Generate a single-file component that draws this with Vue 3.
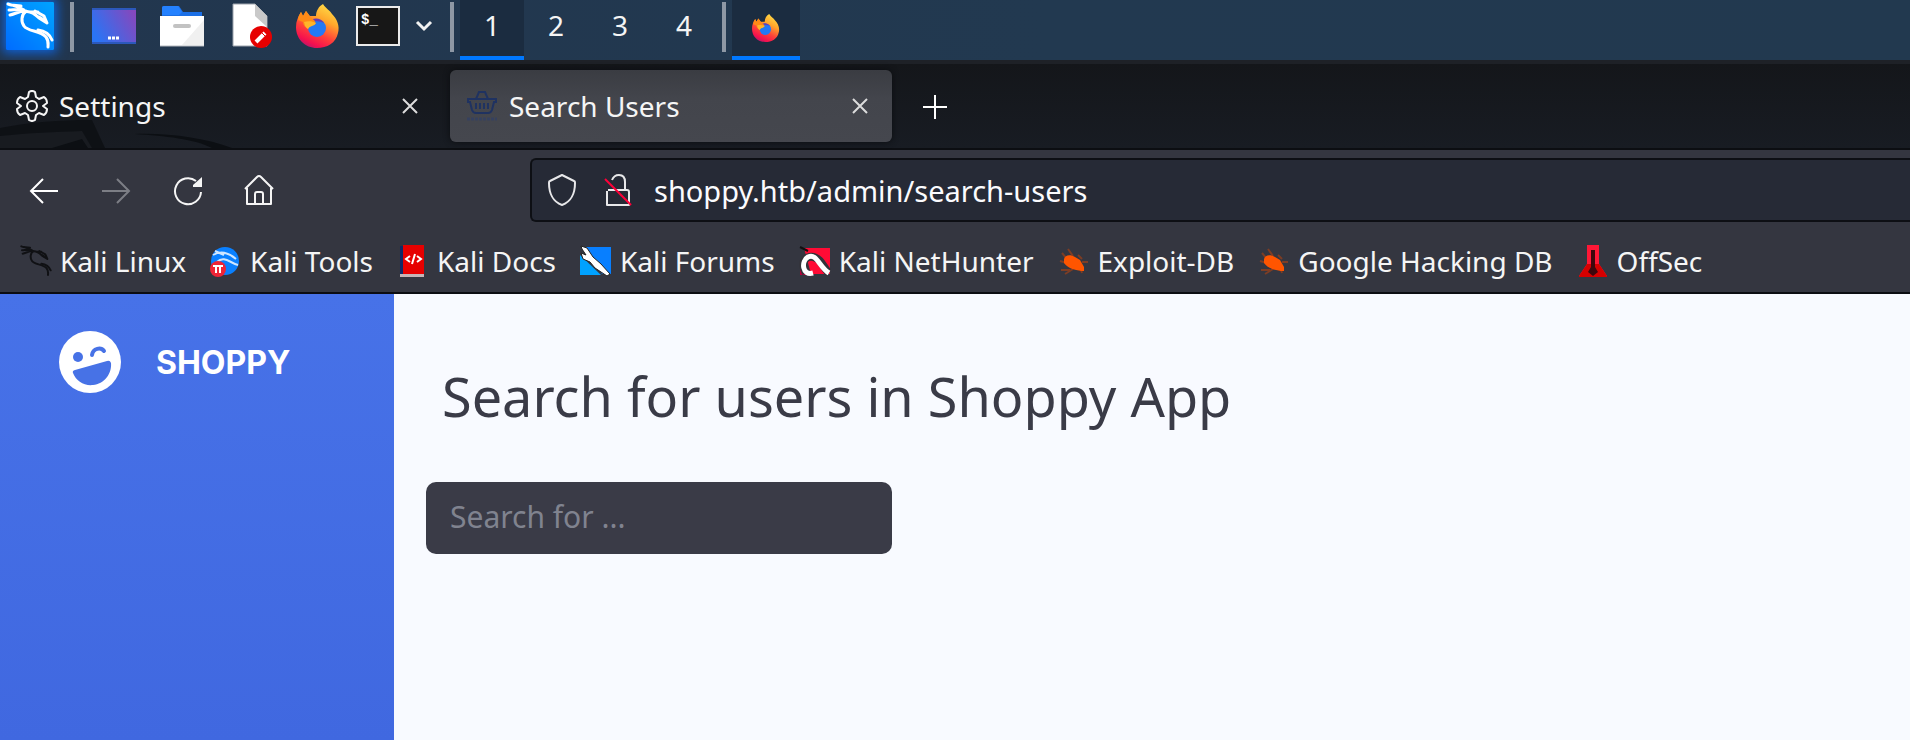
<script setup>
import { ref } from 'vue'

const workspaces = ['1', '2', '3', '4']
const activeWorkspace = ref('1')
const address = ref('shoppy.htb/admin/search-users')
const query = ref('')

const bookmarks = [
  { label: 'Kali Linux', icon: 'dragon' },
  { label: 'Kali Tools', icon: 'tools' },
  { label: 'Kali Docs', icon: 'docs' },
  { label: 'Kali Forums', icon: 'forums' },
  { label: 'Kali NetHunter', icon: 'nethunter' },
  { label: 'Exploit-DB', icon: 'bug' },
  { label: 'Google Hacking DB', icon: 'bug' },
  { label: 'OffSec', icon: 'offsec' },
]
</script>

<template>
  <div class="desktop">
    <svg class="defs" width="0" height="0" aria-hidden="true">
      <defs>
        <linearGradient id="fox-body" x1="0.8" y1="0" x2="0.3" y2="1">
          <stop offset="0" stop-color="#ffe24a" />
          <stop offset="0.35" stop-color="#ffa62b" />
          <stop offset="0.65" stop-color="#ff4139" />
          <stop offset="0.88" stop-color="#f5104f" />
          <stop offset="1" stop-color="#b8186b" />
        </linearGradient>
        <linearGradient id="kali-tile" x1="1" y1="0" x2="0" y2="1">
          <stop offset="0" stop-color="#00a4ff" />
          <stop offset="1" stop-color="#006cff" />
        </linearGradient>
        <linearGradient id="screen" x1="0" y1="0.6" x2="1" y2="0.2">
          <stop offset="0" stop-color="#2a74f5" />
          <stop offset="1" stop-color="#8548bd" />
        </linearGradient>
      </defs>
      <symbol id="firefox" viewBox="0 0 44 44">
        <path fill="url(#fox-body)" d="M27 0C30 5 34 6 36 10C41 15 44 22 42 29C40 39 31 44 21 44C9 44 0 35 0 23C0 17 2 13 5 8L7 12L10 7L14 12L20 12C20 7 23 2 27 0Z" />
        <circle cx="21" cy="24" r="9" fill="#2379f5" />
        <path fill="#6a3bb0" d="M14 17C18 13 25 14 28 19C24 17 19 17 14 17Z" />
        <path fill="#ff8a16" d="M2 16C2 12 4 10 5 8L7 12L10 7L14 13L18 16C20 18 20 20 18 21C15 21 13 23 12 25C9 23 7 21 7 18Z" />
        <path fill="#ffb52a" d="M8 18C12 17 16 17 20 19C18 23 14 21 12 25C9 23 9 21 8 18Z" />
      </symbol>
      <symbol id="dragon" viewBox="0 0 48 48">
        <g fill="none" stroke="currentColor" stroke-linecap="round" stroke-linejoin="round">
          <path stroke-width="3" d="M2 2C8 4 12 4 18 8M5 3L15 4M3 8C8 8 12 6 18 9M4 13C9 12 13 9 19 9M20 9C15 13 15 20 18 24C22 30 34 28 40 35C43 39 42 42 42 45" />
          <path stroke-width="3" d="M32 28C40 29 44 33 46 38M18 10C24 8 29 12 33 16L41 21L38 14L29 9M24 10L32 10" />
          <path stroke-width="3" d="M33 15L38 18" />
        </g>
      </symbol>
    </svg>

    <header class="panel">
      <button class="kali-menu" aria-label="Applications">
        <svg width="48" height="48" viewBox="0 0 48 48">
          <rect width="48" height="48" rx="1" fill="url(#kali-tile)" />
          <use href="#dragon" width="48" height="48" />
        </svg>
      </button>
      <span class="divider"></span>
      <div class="launchers">
        <button aria-label="Show desktop">
          <svg width="44" height="44" viewBox="0 0 44 44">
            <rect y="4" width="44" height="36" fill="#2c58bb" />
            <rect y="6" width="44" height="32" fill="url(#screen)" />
            <path stroke="#fff" stroke-width="3" stroke-dasharray="3 1" d="M16 34H28" />
          </svg>
        </button>
        <button aria-label="File manager">
          <svg width="44" height="44" viewBox="0 0 44 44">
            <path fill="#1b6fe6" d="M2 4Q2 2 4 2H19L23 8H42V14H2Z" />
            <path fill="#2481ff" d="M2 4Q2 2 4 2H18L22 8L19 11H2Z" />
            <path fill="#fff" d="M0 12H44V42H0Z" />
            <path fill="#f0f0f0" d="M44 16V41H22Z" />
            <path stroke="#c2c2c2" stroke-width="4" stroke-linecap="round" d="M15 22H29" />
            <path stroke="#b4b8be" stroke-width="1" d="M0 42H44" />
          </svg>
        </button>
        <button aria-label="Text editor">
          <svg width="44" height="46" viewBox="-3 0 44 46">
            <path fill="#fff" stroke="#9da4ad" d="M2 1H24L36 13V43H2Z" />
            <path fill="#c9c9c9" d="M24 1L36 13V24L24 13Z" />
            <circle cx="30" cy="34" r="11" fill="#e60000" />
            <path stroke="#fff" stroke-width="4" d="M25 39L34 30" />
            <path stroke="#e60000" stroke-width="1" d="M31 30L34 33" />
          </svg>
        </button>
        <button aria-label="Firefox">
          <svg width="44" height="44"><use href="#firefox" width="44" height="44" /></svg>
        </button>
      </div>
      <button class="terminal" aria-label="Terminal">
        <svg width="44" height="40" viewBox="0 0 44 40">
          <rect x="1" y="1" width="42" height="38" fill="#171717" stroke="#ebebeb" stroke-width="2" />
          <text x="5" y="18" class="prompt">$_</text>
        </svg>
      </button>
      <button class="more" aria-label="More launchers">
        <svg width="20" height="16" viewBox="0 0 20 16" fill="none" stroke="#f2f2f2" stroke-width="3">
          <path d="M3 4L10 11L17 4" />
        </svg>
      </button>
      <span class="divider"></span>
      <nav class="workspaces" aria-label="Workspaces">
        <button
          v-for="name in workspaces"
          :key="name"
          :class="{ active: name === activeWorkspace }"
          @click="activeWorkspace = name"
        >{{ name }}</button>
      </nav>
      <span class="divider"></span>
      <button class="task" aria-label="Search Users — Firefox">
        <svg width="28" height="28"><use href="#firefox" width="28" height="28" /></svg>
      </button>
    </header>

    <section class="tabs">
      <svg class="wallpaper" width="240" height="30" viewBox="0 0 240 30" aria-hidden="true">
        <path fill="#0e1115" d="M0 10C30 4 60 2 92 2L105 30H0Z" />
        <path fill="#181b20" d="M0 18C30 15 55 14 82 13L92 30H0Z" />
        <path fill="#0c0f13" d="M52 30L82 21L88 30Z" />
        <path fill="#0c0f13" d="M135 16C170 15 205 20 232 30H212C195 21 165 18 135 16Z" />
      </svg>
      <div class="tab">
        <svg width="32" height="32" viewBox="0 0 32 32" fill="none" stroke="#f5f5f5" stroke-width="2">
          <path stroke-linejoin="round" d="M13 2Q16 0 19 2L20 7L23 9L28 7Q31 9 31 13L27 16L31 19Q31 23 28 25L23 23L20 25L19 30Q16 32 13 30L12 25L9 23L4 25Q1 23 1 19L5 16L1 13Q1 9 4 7L9 9L12 7Z" />
          <circle cx="16" cy="16" r="5" />
        </svg>
        <span class="title">Settings</span>
        <button class="close" aria-label="Close Settings">
          <svg width="18" height="18" viewBox="0 0 18 18" stroke="#dcdcdc" stroke-width="2"><path d="M2 2L16 16M16 2L2 16" /></svg>
        </button>
      </div>
      <div class="tab current">
        <svg width="32" height="32" viewBox="0 0 32 32" fill="none" stroke="#1f3261" stroke-width="2">
          <path d="M2 9H30V12H28L26 20Q25 23 22 23H10Q7 23 6 20L4 12H2ZM10 9L13 2H19L22 9" />
          <path stroke-width="2" d="M10 13V19M14 13V19M18 13V19M22 13V19" />
          <path stroke="#36415e" stroke-width="3" stroke-dasharray="3 1" d="M1 29H31" />
        </svg>
        <span class="title">Search Users</span>
        <button class="close" aria-label="Close Search Users">
          <svg width="18" height="18" viewBox="0 0 18 18" stroke="#dcdcdc" stroke-width="2"><path d="M2 2L16 16M16 2L2 16" /></svg>
        </button>
      </div>
      <button class="new-tab" aria-label="New tab">
        <svg width="26" height="26" viewBox="0 0 26 26" stroke="#fff" stroke-width="2"><path d="M1 14H25M13 2V26" /></svg>
      </button>
    </section>

    <section class="toolbar">
      <div class="history">
        <button aria-label="Back">
          <svg width="32" height="32" viewBox="0 0 32 32" fill="none" stroke="#fff" stroke-width="2"><path d="M30 17H3M15 5L3 17L15 29" /></svg>
        </button>
        <button aria-label="Forward" disabled>
          <svg width="32" height="32" viewBox="0 0 32 32" fill="none" stroke="#7c7e85" stroke-width="2"><path d="M2 17H29M17 5L29 17L17 29" /></svg>
        </button>
        <button aria-label="Reload">
          <svg width="32" height="32" viewBox="0 0 32 32" fill="none" stroke="#f5f5f5" stroke-width="2">
            <path d="M29 18A13 13 0 1 1 24 7" />
            <path fill="#f5f5f5" stroke="none" d="M30 3V13H21V11Z" />
          </svg>
        </button>
        <button aria-label="Home">
          <svg width="32" height="32" viewBox="1 0 32 32" fill="none" stroke="#f5f5f5" stroke-width="2">
            <path stroke-linejoin="round" d="M2 15L14 3Q16 1 18 3L30 15M4 14V30H28V14M12 30V20Q12 18 14 18H18Q20 18 20 20V30" />
          </svg>
        </button>
      </div>
      <label class="address">
        <svg width="32" height="32" viewBox="0 0 32 32" fill="none" stroke="#e8e8ea" stroke-width="2" stroke-linejoin="round">
          <path d="M16 1L28 7Q29 7 29 9C29 19 25 28 16 31C7 28 3 19 3 9Q3 7 4 7Z" />
        </svg>
        <svg width="32" height="32" viewBox="0 0 32 32" fill="none" stroke="#e8e8ea" stroke-width="2" stroke-linejoin="round">
          <path d="M10 6Q12 1 17 1Q23 1 23 8V15M6 16H25Q27 16 27 18V31H5V17" />
          <path stroke="#ff0039" stroke-width="2" d="M3 5L29 31" />
        </svg>
        <input v-model="address" type="text" aria-label="Address" spellcheck="false" />
      </label>
    </section>

    <nav class="bookmarks" aria-label="Bookmarks">
      <a v-for="mark in bookmarks" :key="mark.label" href="#">
        <svg v-if="mark.icon === 'dragon'" class="dark" width="32" height="32"><use href="#dragon" width="32" height="32" /></svg>
        <svg v-else-if="mark.icon === 'tools'" width="32" height="32" viewBox="2 0 32 32">
          <circle cx="17" cy="16" r="14" fill="#0a80ff" />
          <path fill="none" stroke="#cfe6ff" stroke-width="2" d="M5 10C13 5 21 8 28 14M9 17C16 10 22 18 30 20M7 6L16 10" />
          <circle cx="10" cy="24" r="8" fill="#ee2436" />
          <path fill="none" stroke="#fff" stroke-width="2" d="M5 21H15M8 21V28M12 21V28" />
        </svg>
        <svg v-else-if="mark.icon === 'docs'" width="32" height="32" viewBox="0 0 32 32">
          <path fill="#102a66" d="M3 1H7V29H3Z" />
          <path fill="#e60000" d="M6 0H27V29H6Z" />
          <path fill="#c5b5b7" d="M3 29H27V32H3Z" />
          <path fill="none" stroke="#fff" stroke-width="2" d="M13 11L9 14L13 17M20 11L24 14L20 17M18 9L15 19" />
        </svg>
        <svg v-else-if="mark.icon === 'forums'" width="32" height="32" viewBox="0 0 32 32">
          <path fill="#087fff" d="M3 2H31V29H22Z" />
          <path fill="#00a2ff" d="M0 10L21 30H0Z" />
          <path fill="#fff" stroke="#222" d="M1 1L7 3L13 12L21 19L30 29L27 31L15 23L10 17L3 14L1 8L6 10L2 4Z" />
        </svg>
        <svg v-else-if="mark.icon === 'nethunter'" width="32" height="32" viewBox="0 0 32 32">
          <path fill="#ff0b35" d="M5 3H31V29H12Z" />
          <path fill="#b30038" d="M1 22L10 30H1Z" />
          <path fill="none" stroke="#33333a" stroke-width="8" d="M7 28C0 16 8 9 17 13C23 15 25 24 30 28" />
          <path fill="none" stroke="#fff" stroke-width="5" d="M14 28C3 31 2 16 9 12C18 8 20 22 30 28" />
          <path fill="none" stroke="#111" stroke-width="2" d="M1 2L9 6" />
        </svg>
        <svg v-else-if="mark.icon === 'bug'" width="32" height="32" viewBox="0 0 32 32">
          <path fill="none" stroke="#7d3d24" stroke-width="2" d="M10 4L15 11M4 8L9 14M2 16L9 18M3 25H12M7 29L15 24M20 10L24 14M24 17H30M24 28L22 22" />
          <path fill="#ff5500" d="M6 14C7 10 12 9 17 12L22 15L26 22V26C20 26 10 24 6 18Z" />
        </svg>
        <svg v-else width="32" height="32" viewBox="0 0 32 32">
          <path fill="#ff1736" d="M10 0H22V19L30 31H2L10 19Z" />
          <path fill="#d50000" d="M10 19H22L30 31V32H2V31Z" />
          <path fill="#3c070c" d="M14 5H18V22L21 27L16 31L11 27L14 22Z" />
        </svg>
        <span>{{ mark.label }}</span>
      </a>
    </nav>

    <div class="page">
      <aside class="sidebar">
        <a class="brand" href="#">
          <svg width="64" height="64" viewBox="0 0 64 64">
            <circle cx="32" cy="32" r="31" fill="#fff" />
            <circle cx="20" cy="27" r="5" fill="#4772e6" />
            <path fill="none" stroke="#4772e6" stroke-width="4" stroke-linecap="round" d="M34 25C35 18 43 17 46 21" />
            <path fill="#4772e6" d="M17 40L49 31Q52 30 53 33C54 44 46 54 35 55C26 56 18 51 15 43Q14 41 17 40Z" />
          </svg>
          <span>SHOPPY</span>
        </a>
      </aside>
      <main class="content">
        <h1>Search for users in Shoppy App</h1>
        <form role="search" @submit.prevent>
          <input v-model="query" type="text" placeholder="Search for ..." aria-label="Search for users" />
        </form>
      </main>
    </div>
  </div>
</template>

<style>
body {
  margin: 0;
  background: #f8faff;
}
</style>

<style scoped>
.desktop {
  display: flex;
  flex-direction: column;
  min-height: 100vh;
  overflow: hidden;
  font-family: "Noto Sans", sans-serif;
  font-size: 28px;
  color: #f5f5f5;
}
.defs {
  position: absolute;
}
svg {
  display: block;
  flex: none;
}
button {
  display: flex;
  align-items: center;
  justify-content: center;
  padding: 0;
  border: 0;
  background: none;
  color: inherit;
  font: inherit;
}
a {
  color: inherit;
  text-decoration: none;
}

.panel {
  display: flex;
  align-items: center;
  height: 60px;
  background: linear-gradient(90deg, #22364e, #223950 55%, #22394f);
}
.kali-menu {
  align-self: flex-start;
  margin: 2px 16px 0 6px;
  color: #fff;
  box-shadow: 0 0 10px 3px #0f62d8;
}
.divider {
  flex: none;
  align-self: flex-start;
  width: 4px;
  height: 50px;
  margin-top: 2px;
  background: #8e98a5;
}
.launchers {
  display: flex;
  align-items: center;
  gap: 24px;
  height: 52px;
  margin: 0 16px 8px 18px;
}
.terminal {
  height: 52px;
  margin: 0 14px 8px 0;
}
.prompt {
  font: bold 14px "Liberation Mono", monospace;
  fill: #fff;
}
.more {
  width: 20px;
  height: 52px;
  margin: 0 16px 8px 0;
}
.workspaces {
  display: flex;
  height: 100%;
  margin: 0 6px;
}
.workspaces button {
  width: 64px;
  padding-bottom: 6px;
  border-bottom: 4px solid transparent;
}
.workspaces .active,
.task {
  border-bottom: 4px solid #0078ff;
  background: #1b2c40;
}
.task {
  width: 68px;
  height: 100%;
  margin-left: 6px;
}

.tabs {
  position: relative;
  display: flex;
  align-items: center;
  height: 80px;
  padding: 2px 0;
  border-top: 4px solid #1e2127;
  border-bottom: 2px solid #0c0e12;
  background: linear-gradient(#14161a, #181c23);
}
.wallpaper {
  position: absolute;
  left: 0;
  bottom: 0;
}
.tab {
  position: relative;
  display: flex;
  align-items: center;
  box-sizing: border-box;
  width: 442px;
  height: 72px;
  margin-right: 8px;
  padding: 0 23px 0 16px;
  border-radius: 6px;
}
.tab.current {
  background: linear-gradient(#3a3c42, #43454c 40%, #45474e);
  box-shadow: 0 0 6px #0b0d10;
}
.title {
  flex: 1;
  margin-left: 11px;
}
.new-tab {
  margin-left: 22px;
}

.toolbar {
  display: flex;
  align-items: center;
  padding-top: 8px;
  background: #343640;
}
.history {
  display: flex;
  gap: 40px;
  width: 502px;
  padding-left: 28px;
}
.address {
  display: flex;
  flex: 1;
  align-items: center;
  gap: 24px;
  box-sizing: border-box;
  height: 64px;
  padding-left: 14px;
  border: 2px solid #0d0f14;
  border-right: 0;
  border-radius: 6px 0 0 6px;
  background: #262a36;
}
.address input {
  flex: 1;
  min-width: 0;
  margin-left: -4px;
  padding: 0;
  border: 0;
  outline: 0;
  background: none;
  color: #fbfbfe;
  font: 29px "Noto Sans", sans-serif;
}

.bookmarks {
  display: flex;
  align-items: center;
  gap: 24px;
  height: 62px;
  padding: 8px 0 0 20px;
  border-bottom: 2px solid #0c0d12;
  background: #343640;
  white-space: nowrap;
}
.bookmarks a {
  display: flex;
  align-items: center;
  gap: 8px;
}
.dark {
  color: #101114;
}

.page {
  display: flex;
  flex: 1;
  background: #f8faff;
}
.sidebar {
  flex: none;
  width: 394px;
  background: linear-gradient(#4772e8, #4068e0);
}
.brand {
  display: flex;
  align-items: center;
  gap: 34px;
  padding: 36px 0 0 58px;
  color: #fff;
  font: bold 32px Inter, sans-serif;
}
.content {
  flex: 1;
  padding: 68px 32px 0;
  color: #3a3b47;
}
h1 {
  margin: 0 0 52px 16px;
  font-size: 54px;
  font-weight: 400;
  line-height: 68px;
}
.content input {
  display: block;
  box-sizing: border-box;
  width: 466px;
  max-width: 100%;
  height: 72px;
  padding: 0 24px 4px;
  border: 0;
  border-radius: 10px;
  outline: 0;
  background: #3a3b47;
  color: #d1d3e2;
  font: 30px "Noto Sans", sans-serif;
}
.content input::placeholder {
  color: #80838f;
}
</style>
